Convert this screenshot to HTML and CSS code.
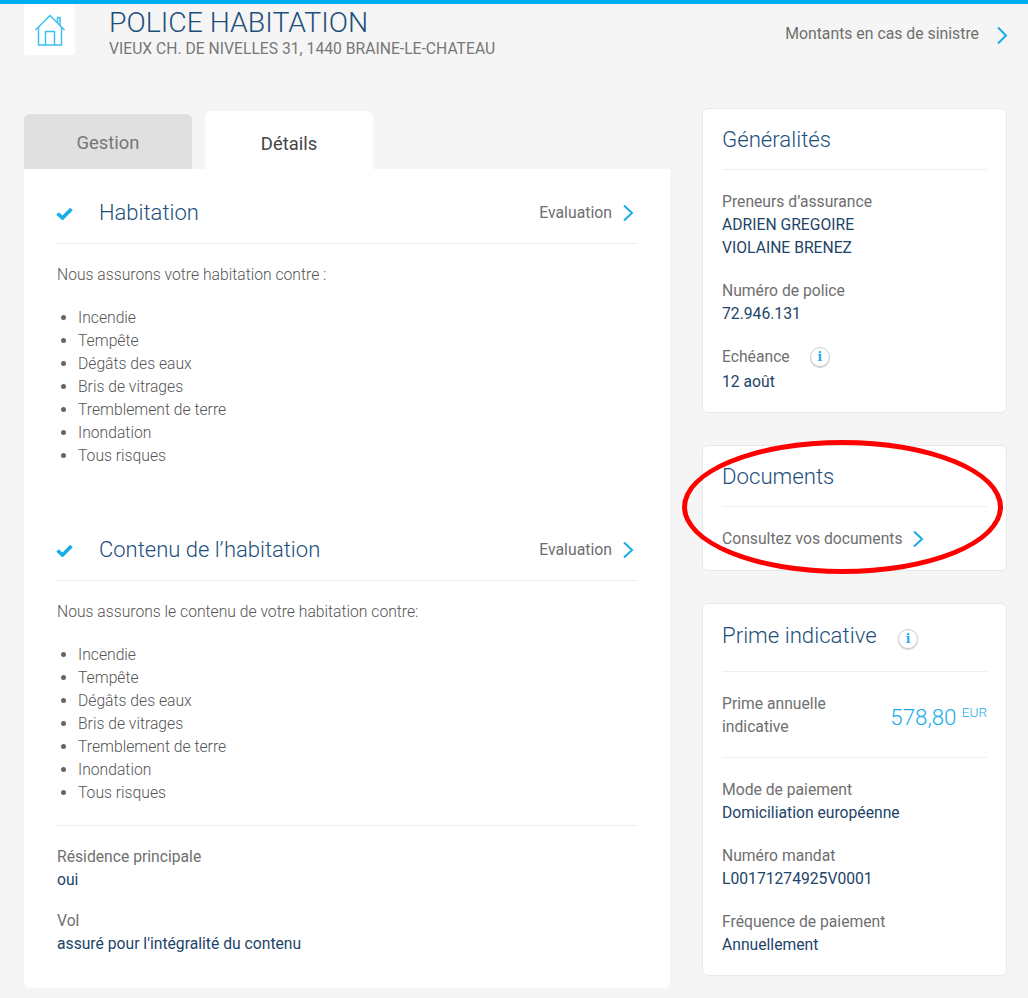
FILE: index.html
```html
<!DOCTYPE html>
<html lang="fr">
<head>
<meta charset="utf-8">
<title>Police habitation</title>
<link rel="stylesheet" href="styles.css">
</head>
<body>
<div class="page">
  <header class="header">
    <div class="logo">
      <svg width="32" height="33" viewBox="0 0 32 33" fill="none" stroke="#3cc0f2" stroke-width="1.5">
        <path d="M1.5 17 L16 2.5 L30.5 17"/>
        <path d="M23.5 9.5 V4.5 H26 V12.5"/>
        <path d="M4.5 14 V32 H27.5 V14"/>
        <path d="M11.5 32 V18.5 H20.5 V32"/>
      </svg>
    </div>
    <div class="heading">
      <h1 class="title">POLICE HABITATION</h1>
      <p class="address">VIEUX CH. DE NIVELLES 31, 1440 BRAINE-LE-CHATEAU</p>
    </div>
    <a class="header-link">Montants en cas de sinistre
      <svg class="chev chev-top" width="12" height="19" viewBox="0 0 12 19"><path d="M2 1.5 L10 9.5 L2 17.5"/></svg>
    </a>
  </header>
  <div class="columns">
    <main class="main">
      <div class="tabs">
        <div class="tab tab-off">Gestion</div>
        <div class="tab tab-on">Détails</div>
      </div>
      <div class="panel">
        <section class="cover">
          <div class="cover-head">
            <svg class="check" width="17" height="13" viewBox="0 0 17 13"><path d="M1.5 6.5 L6.5 11 L15.5 2"/></svg>
            <h2 class="cover-title">Habitation</h2>
            <a class="eval">Evaluation <svg class="chev chev-eval" width="12" height="18" viewBox="0 0 12 18"><path d="M2 1.5 L10 9 L2 16.5"/></svg></a>
          </div>
          <p class="intro">Nous assurons votre habitation contre :</p>
          <ul class="risks">
            <li>Incendie</li><li>Tempête</li><li>Dégâts des eaux</li><li>Bris de vitrages</li><li>Tremblement de terre</li><li>Inondation</li><li>Tous risques</li>
          </ul>
        </section>
        <section class="cover cover-second">
          <div class="cover-head">
            <svg class="check" width="17" height="13" viewBox="0 0 17 13"><path d="M1.5 6.5 L6.5 11 L15.5 2"/></svg>
            <h2 class="cover-title">Contenu de l’habitation</h2>
            <a class="eval">Evaluation <svg class="chev chev-eval" width="12" height="18" viewBox="0 0 12 18"><path d="M2 1.5 L10 9 L2 16.5"/></svg></a>
          </div>
          <p class="intro">Nous assurons le contenu de votre habitation contre:</p>
          <ul class="risks">
            <li>Incendie</li><li>Tempête</li><li>Dégâts des eaux</li><li>Bris de vitrages</li><li>Tremblement de terre</li><li>Inondation</li><li>Tous risques</li>
          </ul>
        </section>
        <div class="extras">
          <div class="field"><div class="label">Résidence principale</div><div class="value">oui</div></div>
          <div class="field"><div class="label">Vol</div><div class="value">assuré pour l'intégralité du contenu</div></div>
        </div>
      </div>
    </main>
    <aside class="side">
      <section class="card card-general">
        <h3 class="card-title">Généralités</h3>
        <div class="field"><div class="label">Preneurs d’assurance</div><div class="value">ADRIEN GREGOIRE</div><div class="value">VIOLAINE BRENEZ</div></div>
        <div class="field"><div class="label">Numéro de police</div><div class="value">72.946.131</div></div>
        <div class="field field-info"><div class="label label-info">Echéance <span class="info">i</span></div><div class="value">12 août</div></div>
      </section>
      <section class="card card-docs">
        <h3 class="card-title">Documents</h3>
        <a class="docs-link">Consultez vos documents <svg class="chev" width="12" height="18" viewBox="0 0 12 18"><path d="M2 1.5 L10 9 L2 16.5"/></svg></a>
      </section>
      <section class="card card-prime">
        <h3 class="card-title card-title-info">Prime indicative <span class="info">i</span></h3>
        <div class="amount-row">
          <div class="label amount-label">Prime annuelle<br>indicative</div>
          <div class="amount">578,80 <sup class="currency">EUR</sup></div>
        </div>
        <div class="field"><div class="label">Mode de paiement</div><div class="value">Domiciliation européenne</div></div>
        <div class="field"><div class="label">Numéro mandat</div><div class="value">L00171274925V0001</div></div>
        <div class="field"><div class="label">Fréquence de paiement</div><div class="value">Annuellement</div></div>
      </section>
    </aside>
  </div>
  <div class="ring"></div>
</div>
</body>
</html>
```
FILE: styles.css
```css
* { box-sizing: border-box; }
html, body { margin: 0; padding: 0; }
body { background: #f5f5f5; font-family: Roboto, "Liberation Sans", sans-serif; font-size: 15.7px; color: #6f6f6f; overflow: hidden; }
.page { position: relative; width: 1028px; height: 998px; border-top: 4px solid #00aeef; overflow: hidden; }
h1, h2, h3, p { margin: 0; font-weight: 400; }
.header { display: flex; height: 104px; padding-left: 24px; padding-right: 20px; }
.logo { width: 51px; height: 51px; background: #fff; border-radius: 3px; display: flex; align-items: center; justify-content: center; }
.heading { margin-left: 34px; }
.title { font-size: 28.4px; font-weight: 300; line-height: 32px; color: #1d4f7c; margin-top: 3px; }
.address { font-size: 15.7px; line-height: 19px; color: #777; }
.header-link { margin-left: auto; margin-top: 20px; font-size: 15.8px; line-height: 20px; color: #6f6f6f; display: flex; gap: 17px; height: 24px; }
.chev { fill: none; stroke: #18ace9; stroke-width: 2; flex: none; }
.chev-top { margin-top: 2px; }
.chev-eval { margin-top: 2px; }
.columns { display: flex; padding-left: 24px; align-items: flex-start; }
.main { width: 646px; }
.tabs { display: flex; align-items: flex-end; gap: 13px; height: 61px; }
.tab { width: 168px; text-align: center; font-size: 18.4px; border-radius: 6px 6px 0 0; }
.tab-off { height: 55px; line-height: 58px; background: #e0e0e0; color: #777; }
.tab-on { height: 58px; line-height: 66px; background: #fff; color: #444; }
.panel { background: #fff; height: 819px; padding: 0 32px; border-radius: 0 0 6px 6px; }
.cover-head { display: flex; align-items: center; height: 75px; padding-top: 12px; border-bottom: 1px solid #efefef; }
.check { fill: none; stroke: #18ace9; stroke-width: 3.6; flex: none; margin-top: 2px; }
.cover-title { font-size: 22px; font-weight: 300; color: #1d4f7c; margin-left: 26px; }
.eval { margin-left: auto; display: flex; align-items: center; gap: 10px; font-size: 15.8px; color: #6f6f6f; padding-right: 4px; }
.intro { font-weight: 300; color: #555; margin-top: 21px; line-height: 20px; padding-left: 1px; }
.risks { margin: 21px 0 0; padding: 0 0 0 22px; font-weight: 300; color: #555; line-height: 23px; }
.risks li::marker { color: #666; }
.cover-second { margin-top: 39px; }
.extras { margin-top: 21px; border-top: 1px solid #efefef; padding-top: 19px; }
.field { margin-bottom: 18px; }
.extras .label, .extras .value { padding-left: 1px; }
.label { color: #6f6f6f; line-height: 23px; }
.value { color: #1d4468; line-height: 23px; }
.side { width: 305px; margin-left: 32px; }
.card { background: #fff; border: 1px solid #e9e9e9; border-radius: 6px; padding: 0 19px; margin-bottom: 32px; }
.card .field { margin-bottom: 20px; }
.card-general { height: 305px; }
.card-docs { height: 126px; }
.card-prime { height: 373px; }
.card-title { font-size: 22.2px; font-weight: 300; color: #1d4f7c; height: 61px; line-height: 61px; border-bottom: 1px solid #efefef; margin-bottom: 20px; }
.card-title-info { height: 68px; line-height: 62px; }
.label-info { display: flex; align-items: center; gap: 20px; }
.field-info .value { margin-top: 2px; }
.info { display: inline-flex; width: 20px; height: 20px; align-items: center; justify-content: center; border: 1px solid #ccc; border-radius: 50%; color: #18ace9; font: 700 12px "DejaVu Serif", serif; box-shadow: 0 1px 0 #ccc; }
.card-title-info .info { margin-left: 16px; }
.docs-link { display: flex; align-items: center; gap: 9px; color: #6f6f6f; margin-top: 22px; }
.amount-row { display: flex; justify-content: space-between; align-items: center; height: 66px; border-bottom: 1px solid #efefef; padding-bottom: 20px; margin-bottom: 20px; }
.amount { font-size: 22.3px; font-weight: 300; color: #18ace9; margin-top: 5px; }
.currency { font-size: 13.5px; vertical-align: 8px; line-height: 0; }
.ring { position: absolute; left: 682px; top: 436px; width: 321px; height: 134px; border: 5px solid #f00; border-radius: 50%; }
```
